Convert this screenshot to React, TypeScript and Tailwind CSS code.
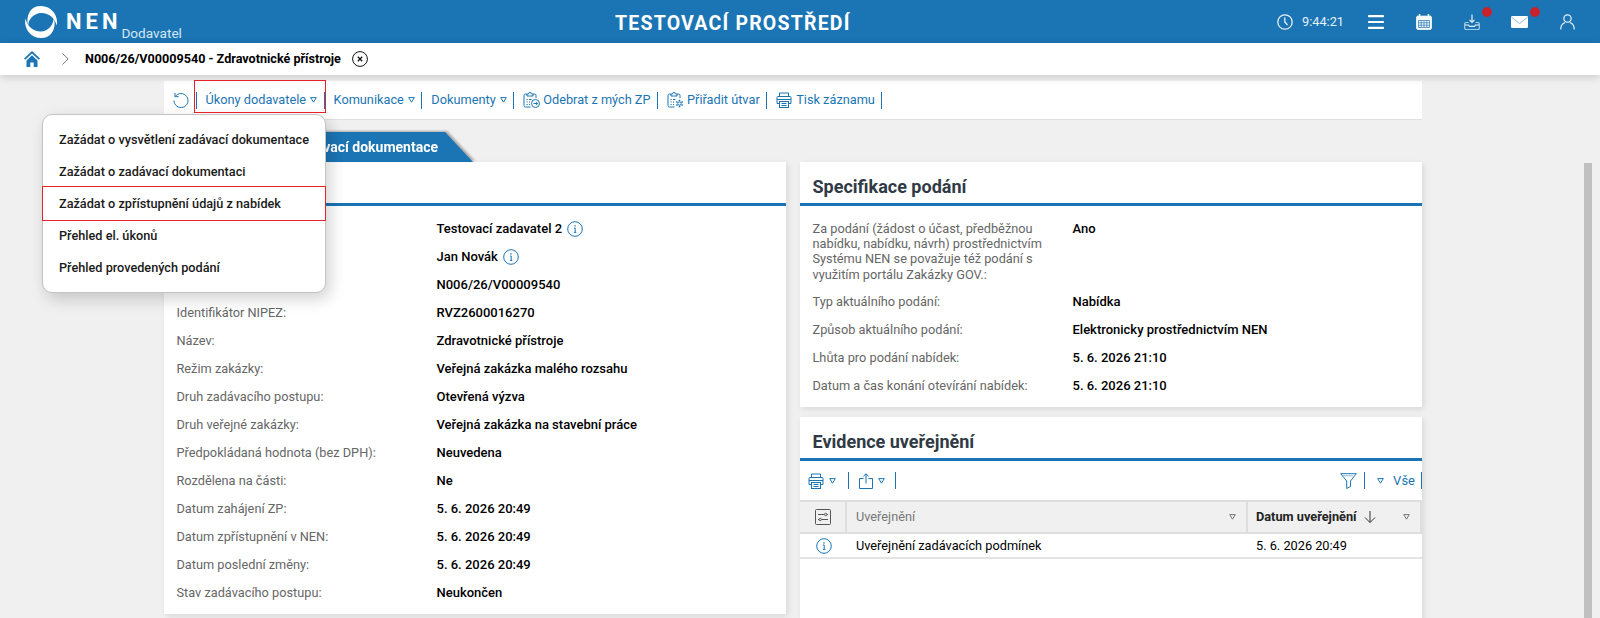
import type { ReactNode } from 'react';

const blue = '#1b75b4';

function Caret({ className = 'text-[#1b75b4]' }: { className?: string }) {
  return (
    <svg width="7" height="6" viewBox="0 0 7 6" className={`shrink-0 ${className}`}>
      <path d="M0.700 0.600h5.600L3.500 5.200z" fill="none" stroke="currentColor" strokeWidth="1" />
    </svg>
  );
}

function Sep() {
  return <span className="block h-[17px] w-px shrink-0 bg-[#1b75b4]" />;
}

function InfoIcon({ size = 16 }: { size?: number }) {
  return (
    <svg width={size} height={size} viewBox="0 0 16 16" fill="none" stroke={blue} className="shrink-0">
      <circle cx="8" cy="8" r="7.300" strokeWidth="1" />
      <path d="M7 7h1.200v4.200M6.900 11.400h2.400" strokeWidth="1" />
      <path d="M8 4.200v1.200" strokeWidth="1.400" />
    </svg>
  );
}

function PrinterIcon() {
  return (
    <svg width="16" height="16" viewBox="0 0 16 16" fill="none" stroke={blue} strokeWidth="1" className="shrink-0">
      <path d="M3.500 4.500V1h9v3.500" />
      <path d="M3.500 11.500H1V5.500a1 1 0 0 1 1-1h12a1 1 0 0 1 1 1v6h-2.500" />
      <path d="M1 7.500h14" />
      <rect x="3.500" y="9.500" width="9" height="6" />
      <path d="M5.500 11.500h5M5.500 13.500h5" />
    </svg>
  );
}

function ClipboardIcon({ badge }: { badge: 'arrow' | 'gear' }) {
  return (
    <svg width="17" height="17" viewBox="0 0 17 17" fill="none" stroke={blue} strokeWidth="1" className="shrink-0">
      <path d="M4 3H2.500a1.500 1.500 0 0 0-1.500 1.500v10A1.500 1.500 0 0 0 2.500 16H7.500" />
      <path d="M10 3h1.500A1.500 1.500 0 0 1 13 4.500V7" />
      <path d="M4 5V3h1.500a1.500 1.500 0 0 1 3 0H10v2z" />
      <path d="M3.500 8.500h1.200M6 8.500h2.500M3.500 11h1.200M6 11h1M3.500 13.500h1.200M6 13.500h1" />
      {badge === 'arrow' ? (
        <>
          <circle cx="12.500" cy="12.500" r="4" />
          <path d="M10.500 12.500h4M13 10.800l1.700 1.700-1.700 1.700" />
        </>
      ) : (
        <>
          <circle cx="12.500" cy="12.500" r="1.700" />
          <path
            d="M12.500 8.800v1.500M12.500 14.700v1.500M9.300 10.600l1.300.8M14.400 13.600l1.300.8M9.300 14.400l1.300-.8M14.400 11.400l1.300-.8"
            strokeWidth="1.500"
          />
        </>
      )}
    </svg>
  );
}

function ToolLink({ children, caret }: { children: ReactNode; caret?: boolean }) {
  return (
    <span className="flex items-center gap-[4px] whitespace-nowrap pb-px pl-[9px] pr-[6.500px] text-[#1b75b4]">
      {children}
      {caret && <Caret />}
    </span>
  );
}

function Row({ label, value, info }: { label: string; value: string; info?: boolean }) {
  return (
    <div className="flex min-h-[28px] py-[6px] leading-[15.200px]">
      <div className="w-[260px] shrink-0 pr-[20px] text-[12.750px] text-[#666666]">{label}</div>
      <div className="flex items-start gap-[5px] font-medium text-black">
        {value}
        {info && <InfoIcon />}
      </div>
    </div>
  );
}

function CardTitle({ children }: { children?: string }) {
  return (
    <div className="flex h-[44px] items-center border-b-[3px] border-[#1b75b4] pl-[12.500px] pt-[7px] text-[18px] font-bold text-[#2f3a45]">
      {children}
    </div>
  );
}

// prvni tri popisky a nadpis karty jsou pod otevrenym menu, na obrazku nejsou videt
const leftRows = [
  { label: '', value: 'Testovací zadavatel 2', info: true },
  { label: '', value: 'Jan Novák', info: true },
  { label: '', value: 'N006/26/V00009540' },
  { label: 'Identifikátor NIPEZ:', value: 'RVZ2600016270' },
  { label: 'Název:', value: 'Zdravotnické přístroje' },
  { label: 'Režim zakázky:', value: 'Veřejná zakázka malého rozsahu' },
  { label: 'Druh zadávacího postupu:', value: 'Otevřená výzva' },
  { label: 'Druh veřejné zakázky:', value: 'Veřejná zakázka na stavební práce' },
  { label: 'Předpokládaná hodnota (bez DPH):', value: 'Neuvedena' },
  { label: 'Rozdělena na části:', value: 'Ne' },
  { label: 'Datum zahájení ZP:', value: '5. 6. 2026 20:49' },
  { label: 'Datum zpřístupnění v NEN:', value: '5. 6. 2026 20:49' },
  { label: 'Datum poslední změny:', value: '5. 6. 2026 20:49' },
  { label: 'Stav zadávacího postupu:', value: 'Neukončen' },
];

const rightRows = [
  {
    label:
      'Za podání (žádost o účast, předběžnou nabídku, nabídku, návrh) prostřednictvím Systému NEN se považuje též podání s využitím portálu Zakázky GOV.:',
    value: 'Ano',
  },
  { label: 'Typ aktuálního podání:', value: 'Nabídka' },
  { label: 'Způsob aktuálního podání:', value: 'Elektronicky prostřednictvím NEN' },
  { label: 'Lhůta pro podání nabídek:', value: '5. 6. 2026 21:10' },
  { label: 'Datum a čas konání otevírání nabídek:', value: '5. 6. 2026 21:10' },
];

const menuItems = [
  'Zažádat o vysvětlení zadávací dokumentace',
  'Zažádat o zadávací dokumentaci',
  'Zažádat o zpřístupnění údajů z nabídek',
  'Přehled el. úkonů',
  'Přehled provedených podání',
];

function Header() {
  return (
    <header className="relative flex h-[43px] items-center bg-[#1b75b4] text-white">
      <svg width="34" height="34" viewBox="0 0 34 34" className="ml-[24px] shrink-0" fill="#fff">
        <path d="M17 1a16 16 0 0 1 15.600 19.500C31 13 25 8 17.500 8 13 8 9.500 10 7 13 4.500 16 4 19 4.300 22 1.800 14 4 1 17 1z" />
        <path d="M17 33A16 16 0 0 1 1.500 13.500C3 21 9 26.500 16.500 26.500c4.500 0 8-2 10.500-5.500 2-3 2.800-6 2.700-9C32.300 20 30 33 17 33z" />
      </svg>
      <span className="ml-[8px] text-[22px] font-bold tracking-[4px]">NEN</span>
      <span className="mt-[23px] text-[13.600px] text-[#d5e6f2]">Dodavatel</span>
      <div className="absolute left-[615px] top-[10px] text-[19.500px] font-bold leading-[28px] tracking-[1.200px]">
        TESTOVACÍ PROSTŘEDÍ
      </div>
      <div className="ml-auto flex items-center pr-[25px]">
        <svg width="16" height="16" viewBox="0 0 16 16" fill="none" stroke="#e6f0f7" strokeWidth="1.300">
          <circle cx="8" cy="8" r="7.200" />
          <path d="M7.800 3.500V8l2.700 3" />
        </svg>
        <span className="ml-[9px] text-[12.750px] text-[#e6f0f7]">9:44:21</span>
        <svg width="16" height="14" viewBox="0 0 16 14" className="ml-[24px]" fill="#fff">
          <rect width="16" height="2.200" rx="0.800" />
          <rect y="5.900" width="16" height="2.200" rx="0.800" />
          <rect y="11.800" width="16" height="2.200" rx="0.800" />
        </svg>
        <svg width="16" height="16" viewBox="0 0 16 16" className="ml-[32px]" fill="none" stroke="#fff">
          <rect x="0.700" y="2.200" width="14.600" height="13.100" rx="1" fill="#fff" />
          <path d="M3.500 0v3.500M12.500 0v3.500" strokeWidth="1.400" />
          <path
            d="M2.500 6.500h11v7h-11zM2.500 8.800h11M2.500 11.200h11M5.200 6.500v7M8 6.500v7M10.800 6.500v7"
            stroke="#1b75b4"
            strokeWidth="0.700"
          />
        </svg>
        <span className="relative ml-[32px] flex">
          <svg width="16" height="16" viewBox="0 0 16 16" fill="none" stroke="#e6f0f7" strokeWidth="1.200">
            <path d="M8 0.500v7.500M5.500 5.800 8 8.300l2.500-2.500" />
            <path
              d="M4.500 8.500H2a1.300 1.300 0 0 0-1.300 1.300v4.400A1.300 1.300 0 0 0 2 15.500h12a1.300 1.300 0 0 0 1.300-1.300V9.800A1.300 1.300 0 0 0 14 8.500h-2.500"
              stroke="#a9cde6"
            />
            <path d="M1 11h3.500l1 1.300h5l1-1.300H15" />
          </svg>
          <span className="absolute left-[18px] top-[-7px] h-[10px] w-[10px] rounded-full bg-[#c8232c]" />
        </span>
        <span className="relative ml-[31px] flex">
          <svg width="17" height="12" viewBox="0 0 17 12">
            <rect width="17" height="12" rx="1.200" fill="#fff" />
            <path d="M0.500 1.200 8.500 7.500l8-6.300" fill="none" stroke="#8fbcdc" strokeWidth="1" />
          </svg>
          <span className="absolute left-[19px] top-[-9px] h-[10px] w-[10px] rounded-full bg-[#c8232c]" />
        </span>
        <svg width="15" height="16" viewBox="0 0 15 16" className="ml-[32px]" fill="none" stroke="#e6f0f7" strokeWidth="1.200">
          <circle cx="7.500" cy="4.500" r="3.700" />
          <path d="M0.700 15.500c0-4 2.500-6.300 4.500-7M14.300 15.500c0-4-2.500-6.300-4.500-7" />
        </svg>
      </div>
    </header>
  );
}

function Breadcrumb() {
  return (
    <div className="relative z-10 flex h-[32px] items-center bg-white shadow-[0_2px_8px_rgba(0,0,0,0.16)]">
      <svg width="16" height="16" viewBox="0 0 16 16" className="ml-[24px] shrink-0">
        <path d="M8 0 0 7.500l1.200 1.300L8 2.500l6.800 6.300L16 7.500z" fill="#1b75b4" />
        <path d="M2.500 9.500 8 4.300l5.500 5.200V16H9.700v-4.500H6.300V16H2.500z" fill="#1b75b4" />
      </svg>
      <svg width="7" height="12" viewBox="0 0 7 12" className="ml-[22px] shrink-0" fill="none" stroke="#777" strokeWidth="1">
        <path d="m0.500 0.500 5.700 5.500-5.700 5.500" />
      </svg>
      <span className="ml-[16px] text-[12.600px] font-bold text-black">N006/26/V00009540 - Zdravotnické přístroje</span>
      <svg width="16" height="16" viewBox="0 0 16 16" className="ml-[11px] shrink-0" fill="none" stroke="#111" strokeWidth="1">
        <circle cx="8" cy="8" r="7.400" />
        <path d="m5.800 5.800 4.400 4.400m0-4.400-4.400 4.400" strokeWidth="1.300" />
      </svg>
    </div>
  );
}

function Toolbar() {
  return (
    <div className="flex h-[39px] w-[1258px] items-center border-b border-[#e2e2e2] bg-white pl-[9px] text-[12.750px]">
      <svg width="16" height="16" viewBox="0 0 16 16" className="mr-[6.500px] shrink-0" fill="none" stroke={blue} strokeWidth="1">
        <path d="M2.300 4.500A7 7 0 1 1 1 8.500" />
        <path d="M2 1v3.700h3.700" />
      </svg>
      <Sep />
      <ToolLink caret>Úkony dodavatele</ToolLink>
      <Sep />
      <ToolLink caret>Komunikace</ToolLink>
      <Sep />
      <ToolLink caret>Dokumenty</ToolLink>
      <Sep />
      <ToolLink>
        <span className="flex items-center gap-[3px]">
          <ClipboardIcon badge="arrow" />
          Odebrat z mých ZP
        </span>
      </ToolLink>
      <Sep />
      <ToolLink>
        <span className="flex items-center gap-[3px]">
          <ClipboardIcon badge="gear" />
          Přiřadit útvar
        </span>
      </ToolLink>
      <Sep />
      <ToolLink>
        <span className="flex items-center gap-[4px]">
          <PrinterIcon />
          Tisk záznamu
        </span>
      </ToolLink>
      <Sep />
    </div>
  );
}

function EvidenceCard() {
  return (
    <section className="h-[300px] bg-white shadow-[2px_2px_6px_rgba(0,0,0,0.1)]">
      <CardTitle>Evidence uveřejnění</CardTitle>
      <div className="flex h-[39px] items-center pl-[8px]">
        <PrinterIcon />
        <span className="ml-[5px] mr-[12px] flex">
          <Caret />
        </span>
        <Sep />
        <svg width="14" height="16" viewBox="0 0 14 16" className="ml-[10px]" fill="none" stroke={blue} strokeWidth="1">
          <path d="M4.500 5.500h-4v10h13v-10h-4" />
          <path d="M7 10.500V0.800M4.300 3.500 7 0.800l2.700 2.700" />
        </svg>
        <span className="ml-[5px] mr-[10px] flex">
          <Caret />
        </span>
        <Sep />
        <svg width="17" height="16" viewBox="0 0 17 16" className="ml-auto" fill="none" stroke={blue} strokeWidth="1">
          <path d="M0.700 0.700h15.600L10.500 8v5.500l-3.800 2V8z" />
          <path d="M3 2.800h10" stroke="#8fbcdc" />
        </svg>
        <span className="ml-[7px] flex">
          <Sep />
        </span>
        <span className="ml-[12px] flex">
          <Caret />
        </span>
        <span className="ml-[9px] text-[#1b75b4]">Vše</span>
        <span className="ml-[6px] flex">
          <Sep />
        </span>
      </div>
      <div className="grid h-[34px] grid-cols-[47px_401px_174px] border-y-2 border-[#dedede] bg-[#f0f0f0] text-[12.750px]">
        <div className="flex items-center justify-center border-r-2 border-[#dedede]">
          <svg width="16" height="16" viewBox="0 0 16 16" fill="none" stroke="#555" strokeWidth="1">
            <rect x="0.500" y="0.500" width="15" height="15" rx="1" />
            <path d="M3 5.500h6.500M12 5.500h1M3 10.500h1M6.500 10.500H13" />
            <circle cx="10.700" cy="5.500" r="1.200" />
            <circle cx="5.200" cy="10.500" r="1.200" />
          </svg>
        </div>
        <div className="flex items-center justify-between border-r-2 border-[#dedede] pl-[9px] pr-[10px] text-[#777777]">
          Uveřejnění
          <Caret className="text-[#777777]" />
        </div>
        <div className="flex items-center border-r-2 border-[#dedede] pl-[8px] pr-[10px] font-bold text-[#222222]">
          Datum uveřejnění
          <svg width="12" height="12" viewBox="0 0 12 12" className="ml-[7px]" fill="none" stroke="#333" strokeWidth="1">
            <path d="M6 0v11.500M1 6.500l5 5 5-5" />
          </svg>
          <span className="ml-auto flex">
            <Caret className="text-[#777777]" />
          </span>
        </div>
      </div>
      <div className="grid h-[25px] grid-cols-[47px_401px_174px] items-center border-b-2 border-[#e4e4e4] text-[12.750px] text-black">
        <div className="flex justify-center">
          <InfoIcon />
        </div>
        <div className="pl-[9px]">Uveřejnění zadávacích podmínek</div>
        <div className="pl-[8px]">5. 6. 2026 20:49</div>
      </div>
    </section>
  );
}

export default function App() {
  return (
    <div className="relative h-[618px] w-[1600px] overflow-hidden bg-[#f0f0f0] font-[Roboto,sans-serif] text-[13px]">
      <Header />
      <Breadcrumb />
      <main className="pl-[164px] pt-[6px]">
        <Toolbar />
        <div className="mt-[12px] h-[30px] w-[309px] drop-shadow-[2px_-1px_1px_rgba(0,0,0,0.3)]">
          <div className="flex h-full items-center justify-end bg-[#1b75b4] pr-[35px] pt-px text-[14px] font-bold text-white [clip-path:polygon(0_0,281px_0,100%_100%,0_100%)]">
            Zadávací dokumentace
          </div>
        </div>
        <div className="grid w-[1258px] grid-cols-[622px_622px] gap-x-[14px]">
          <section className="h-[452px] bg-white shadow-[2px_2px_6px_rgba(0,0,0,0.1)]">
            <CardTitle />
            <div className="pl-[12.500px] pt-[9px]">
              {leftRows.map((r) => (
                <Row key={r.value + r.label} {...r} />
              ))}
            </div>
          </section>
          <div className="flex flex-col gap-[10px]">
            <section className="h-[245px] bg-white shadow-[2px_2px_6px_rgba(0,0,0,0.1)]">
              <CardTitle>Specifikace podání</CardTitle>
              <div className="pl-[12.500px] pt-[9px]">
                {rightRows.map((r) => (
                  <Row key={r.label} {...r} />
                ))}
              </div>
            </section>
            <EvidenceCard />
          </div>
        </div>
      </main>

      {/* otevrene menu a zvyrazneni pres obsah */}
      <div className="absolute left-[42px] top-[114px] z-20 w-[284px] rounded-[10px] border border-[#c4c4c4] bg-white py-[8px] pt-[9px] shadow-[4px_6px_16px_rgba(0,0,0,0.18)]">
        {menuItems.map((item) => (
          <div key={item} className="flex h-[32px] items-center pl-[16px] text-[12.700px] font-medium text-[#1a1a1a]">
            {item}
          </div>
        ))}
      </div>
      <div className="absolute left-[42px] top-[186px] z-30 h-[35px] w-[284px] border border-[#e8202a]" />
      <div className="absolute left-[194px] top-[80px] z-30 h-[33px] w-[132px] border border-[#e8202a]" />
      <div className="absolute left-[1584px] top-[163px] h-[455px] w-[8px] bg-[#c0c0c0]" />
    </div>
  );
}
